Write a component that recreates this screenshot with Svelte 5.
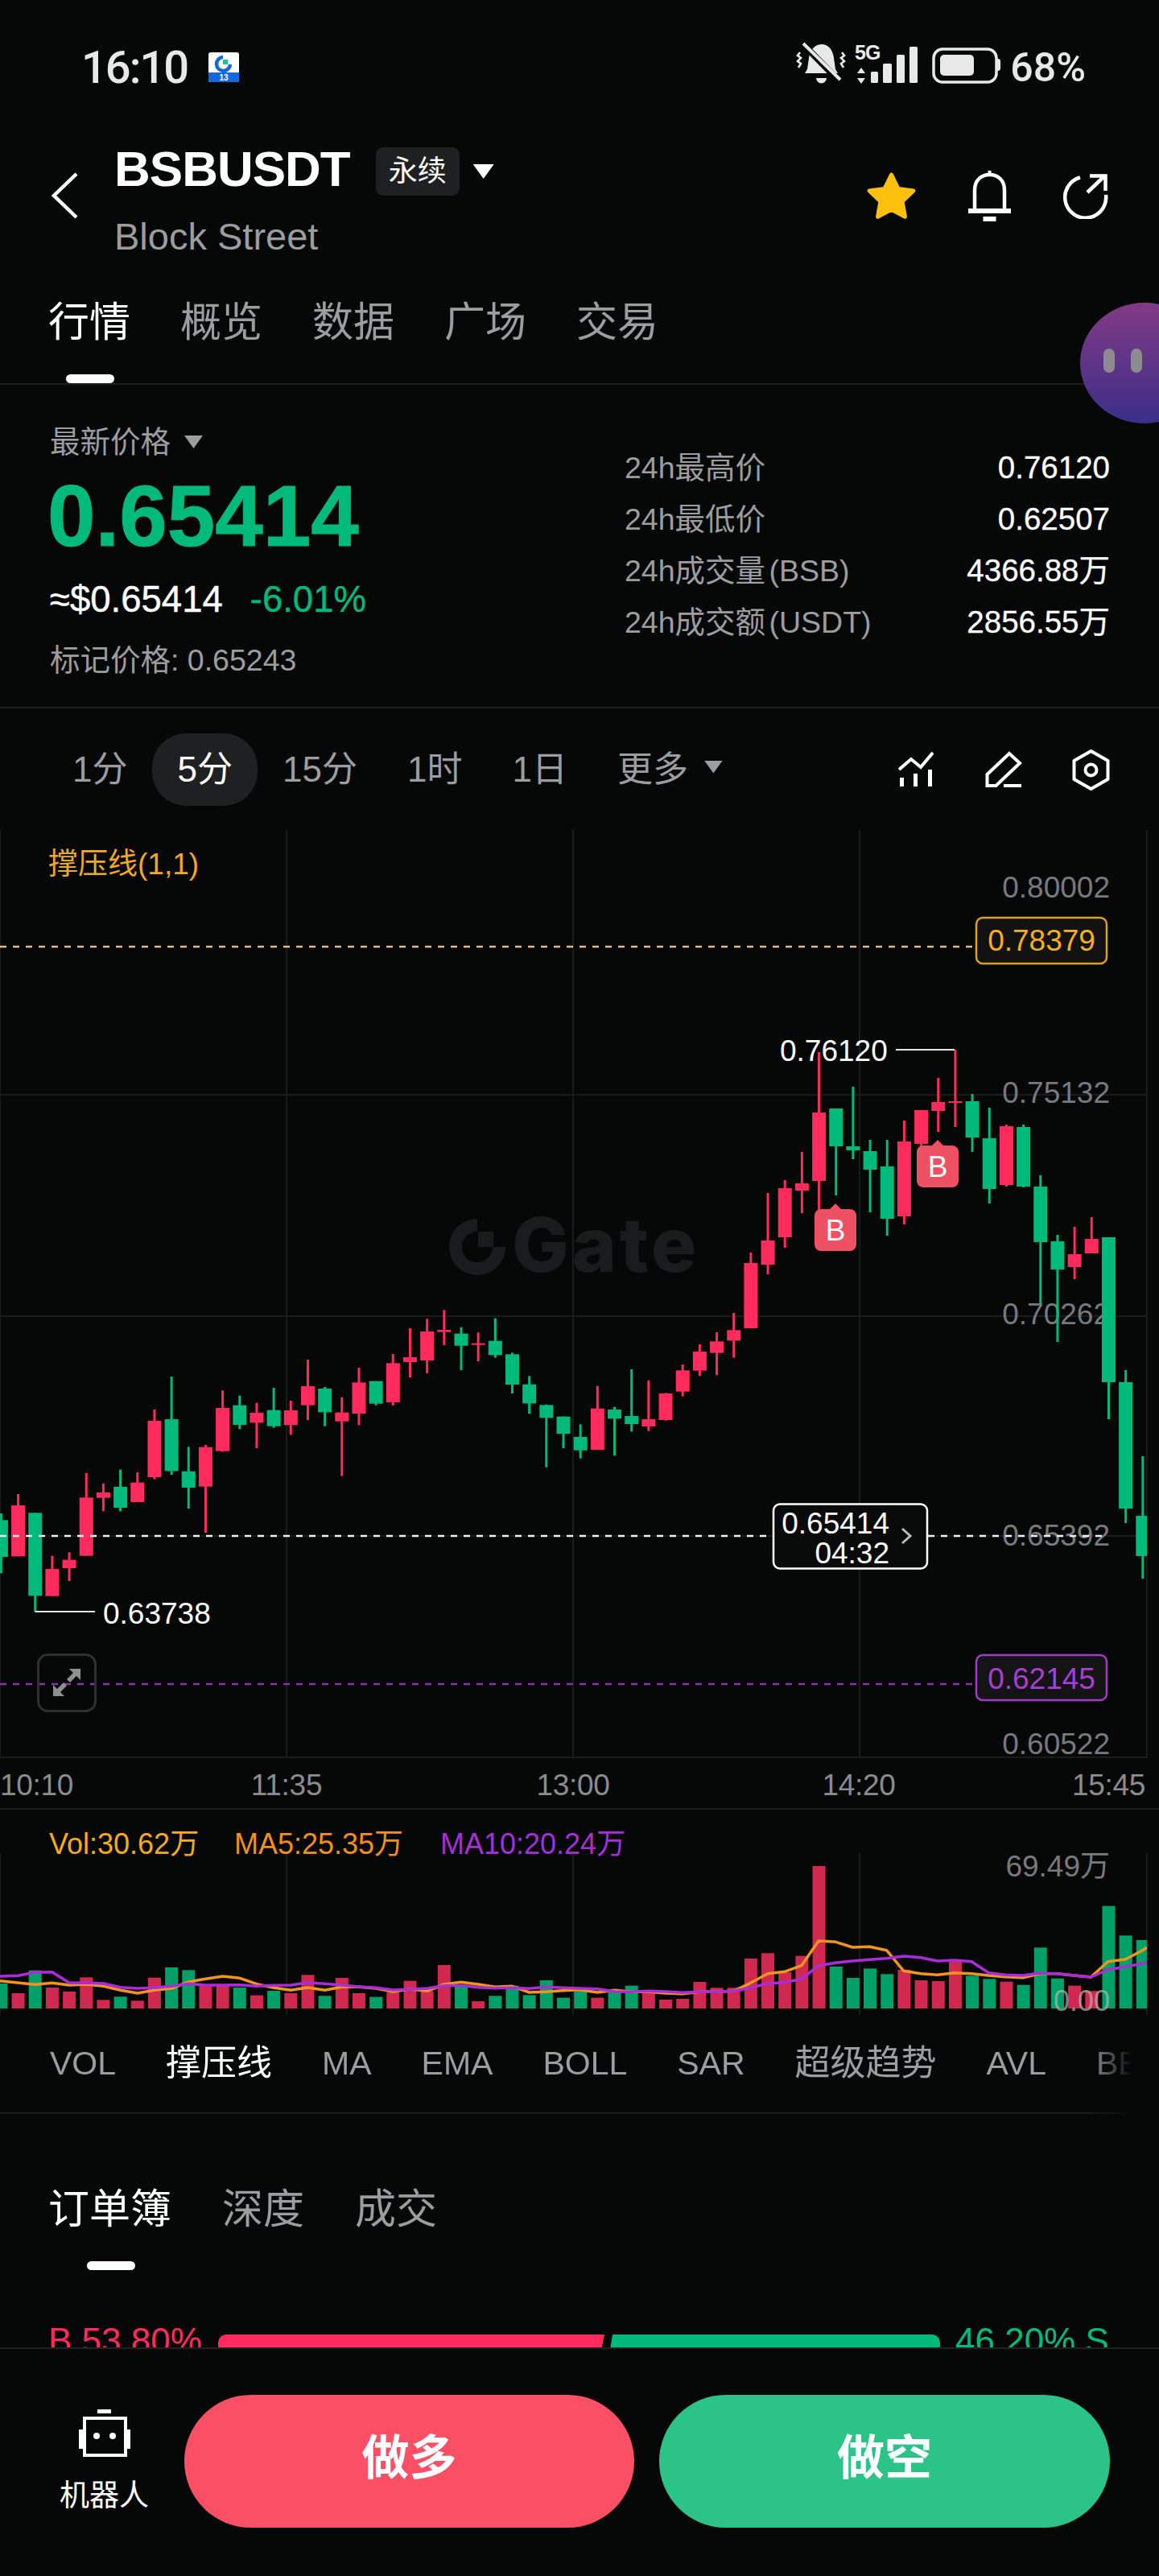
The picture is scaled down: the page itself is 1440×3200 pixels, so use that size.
<script>
  const Z = (v) => 1620 + v / 3;
  const early = [
    ['g',805,942,780,1003],['r',750,940,708,940],['g',778,1087,778,1148],['r',987,1088,938,1088],['r',953,984,925,1032],
    ['r',721,938,630,938],['r',702,722,668,772],['g',681,759,617,772],['r',665,738,627,738],['r',435,645,393,653],
    ['g',429,622,270,636],['g',623,684,532,762],['r',533,680,525,852],['r',387,548,322,550],['g',377,450,341,466],
    ['r',405,442,368,537],['g',395,455,312,461],['r',396,451,360,487],['r',306,377,207,432],['g',315,403,309,455],
    ['r',404,437,347,641],['r',292,408,237,451],['g',287,371,287,377],['r',220,366,186,378],['r',198,216,90,273],
    ['r',102,210,55,258],['r',96,104,22,153],['g',110,155,86,246],['r',146,150,106,213],['g',137,190,53,200],
    ['g',187,300,181,333],['g',299,370,268,409],['g',376,424,374,608],['g',419,483,419,537],['g',495,545,448,575],
    ['r',389,543,305,543],['g',393,427,383,565],['g',417,447,243,475],['r',429,456,284,473],['r',333,432,331,434],
    ['r',247,326,225,344],['r',177,248,150,268],['r',139,182,105,265],['r',97,136,33,200]
  ].map(([c, a, b, d, e]) => [c, Z(a), Z(b), Z(d), Z(e)]);
  const late = [
    ['r',1569,1650,1556,1650],['r',1541,1571,1482,1583],['r',1476,1537,1466,1550],['r',1470,1479,1431,1507],
    ['r',1382,1467,1307,1503],['g',1377,1424,1377,1485],['g',1424,1429,1350,1440],['g',1430,1453,1416,1506],
    ['g',1449,1514,1416,1535],['r',1418,1511,1392,1521],['r',1379,1421,1379,1424],['r',1369,1380,1339,1406],
    ['r',1368,1370,1304,1400],['g',1368,1413,1359,1431],['g',1414,1477,1376,1495],['r',1399,1472,1397,1474],
    ['g',1400,1474,1397,1475],['g',1474,1543,1460,1620],['g',1542,1577,1534,1667],['r',1558,1574,1524,1589],
    ['r',1539,1557,1512,1557],['g',1537,1717,1537,1763],['g',1717,1874,1702,1892],['g',1883,1933,1809,1961]
  ];
  const cx = (i) => 1.4 + 21.17 * i;
  const candles = [...early, ...late].map(([c, top, bottom, wt, wb], i) => ({
    c, x: cx(i), top, h: Math.max(2, bottom - top), wt, wb
  }));

  const volTops = [672,708,623,687,702,649,733,721,736,650,612,622,680,680,687,716,699,708,640,718,651,708,722,705,662,700,603,680,738,718,680,715,660,725,700,725,695,680,700,732,729,666,688,688,579,559,630,569,234,609,651,616,637,621,660,663,590,643,655,665,677,538,653,680,700,383,493,510];
  const VY = (v) => 2240 + v / 3;
  const bars = volTops.map((t, i) => ({ x: cx(i), top: VY(t), h: 2495 - VY(t), c: candles[i].c }));

  const lineOf = (left, right) => {
    const a = left.map(([x, y]) => `${(x / 2.178).toFixed(1)},${VY(y).toFixed(1)}`);
    const b = right.map(([x, y]) => `${(720 + x / 2.178).toFixed(1)},${VY(y).toFixed(1)}`);
    return [...a, ...b].join(' ');
  };
  const orange = lineOf(
    [[0,662],[95,676],[141,670],[188,678],[234,675],[280,682],[326,697],[372,708],[418,697],[464,690],[510,666],[556,655],[603,645],[649,652],[695,674],[741,688],[787,697],[833,687],[879,697],[925,685],[971,685],[1018,690],[1063,702],[1109,693],[1156,700],[1202,675],[1248,667],[1294,675],[1340,685],[1386,682],[1432,705],[1478,703],[1524,698]],
    [[0,695],[49,705],[95,697],[141,703],[187,703],[233,708],[279,710],[325,703],[371,703],[417,700],[463,670],[509,635],[555,628],[601,605],[647,513],[693,517],[739,537],[785,535],[831,548],[877,625],[923,635],[969,640],[1015,632],[1061,635],[1107,642],[1153,647],[1200,650],[1246,635],[1292,635],[1338,642],[1384,648],[1430,590],[1477,582],[1522,550],[1535,538]]
  );
  const purple = lineOf(
    [[0,645],[49,643],[95,630],[141,629],[188,670],[234,669],[280,672],[326,686],[372,690],[418,688],[464,682],[510,673],[556,678],[603,678],[649,677],[695,682],[741,679],[787,678],[833,668],[879,673],[925,678],[971,684],[1018,688],[1063,696],[1109,694],[1156,690],[1202,680],[1248,679],[1294,686],[1340,689],[1386,688],[1432,691],[1478,685],[1524,688]],
    [[0,690],[49,692],[95,702],[141,703],[187,700],[233,702],[279,706],[325,703],[371,703],[417,700],[463,688],[509,672],[555,668],[601,655],[647,605],[693,595],[739,588],[785,583],[831,578],[877,570],[923,575],[969,588],[1015,585],[1061,590],[1107,632],[1153,640],[1200,642],[1246,633],[1292,635],[1338,642],[1384,648],[1430,620],[1477,610],[1522,598],[1535,592]]
  );

  const grid = [0, 356, 712, 1068, 1425];
  const hgrid = [1360, 1635, 1908, 2183];
  const mainTabs = ['行情', '概览', '数据', '广场', '交易'];
  const frames = ['1分', '5分', '15分', '1时', '1日'];
  const stats = [
    ['24h最高价', '0.76120'],
    ['24h最低价', '0.62507'],
    ['24h成交量 (BSB)', '4366.88万'],
    ['24h成交额 (USDT)', '2856.55万']
  ];
  const indicators = ['VOL', '撑压线', 'MA', 'EMA', 'BOLL', 'SAR', '超级趋势', 'AVL', 'BBI'];
  const axisPrices = [['0.80002', 1115], ['0.75132', 1370], ['0.70262', 1645], ['0.65392', 1920], ['0.60522', 2179]];
  const markers = [{ x: 1038, y: 1502 }, { x: 1165, y: 1423 }];
</script>

<div class="app">
  <div class="status">
    <span class="time">16:10</span>
    <svg class="mini" width="38" height="37" viewBox="0 0 38 37">
      <rect width="38" height="37" rx="3" fill="#fff" />
      <path d="M0 25h38v9a3 3 0 0 1-3 3H3a3 3 0 0 1-3-3z" fill="#1467dc" />
      <path d="M18 6a8.5 8.5 0 1 0 9 9" fill="none" stroke="#1467dc" stroke-width="4.5" />
      <rect x="18" y="9" width="6" height="6" fill="#1fc48c" />
      <text x="19" y="35" text-anchor="middle" class="mini-t">13</text>
    </svg>
    <svg class="sysicons" width="254" height="53" viewBox="0 0 254 53">
      <path d="M32 3c8 0 14 7 15 17l2 14 3 5H11l3-5 2-14C17 10 24 3 32 3z" fill="#e8e8e8" />
      <path d="M25 45h13a6.5 6.5 0 0 1-13 0z" fill="#e8e8e8" />
      <path d="M6 0 53 48" stroke="#060808" stroke-width="8" />
      <path d="M9 2 55 47" stroke="#e8e8e8" stroke-width="4" />
      <path d="M5 13l-3 4 4 3-4 4 4 3-3 5M57 13l3 4-4 3 4 4-4 3 3 5" fill="none" stroke="#e8e8e8" stroke-width="2.6" />
      <text x="73" y="22" class="fiveg">5G</text>
      <path d="M81 32l5 7H76zM81 52l5-7H76z" fill="#e8e8e8" />
      <rect x="93" y="37" width="9" height="14" rx="1.5" fill="#e8e8e8" />
      <rect x="108" y="27" width="11" height="24" rx="1.5" fill="#e8e8e8" />
      <rect x="125" y="16" width="10" height="35" rx="1.5" fill="#e8e8e8" />
      <rect x="141" y="6" width="10" height="45" rx="1.5" fill="#e8e8e8" />
      <rect x="171" y="9" width="78" height="41" rx="11" fill="none" stroke="#e8e8e8" stroke-width="3.5" />
      <rect x="179" y="16" width="42" height="26" rx="5" fill="#e8e8e8" />
      <path d="M250 21h1a3 3 0 0 1 3 3v9a3 3 0 0 1-3 3h-1z" fill="#e8e8e8" />
    </svg>
    <span class="pct">68%</span>
  </div>

  <header class="header">
    <svg class="back" width="34" height="58" viewBox="0 0 34 58">
      <path d="M32 2 4 29l28 27" fill="none" stroke="#fff" stroke-width="4.5" />
    </svg>
    <div class="titles">
      <div class="title-row">
        <h1>BSBUSDT</h1>
        <span class="tag">永续</span>
        <span class="tri tri-white"></span>
      </div>
      <div class="sub">Block Street</div>
    </div>
    <div class="head-icons">
      <svg width="63" height="60" viewBox="0 0 63 60">
        <path d="M31.5 4l8.4 17.4 19 2.6-13.8 13.3 3.3 19-16.9-9.1-16.9 9.100 3.300-19L4.100 24l19-2.600z" fill="#fdc00d" stroke="#fdc00d" stroke-width="5" stroke-linejoin="round" />
      </svg>
      <svg width="53" height="63" viewBox="0 0 53 63">
        <path d="M8 49V24C8 12 16 5 26.500 5S45 12 45 24v25" fill="none" stroke="#fff" stroke-width="4.500" />
        <rect x="24.500" y="0" width="4" height="7" fill="#fff" />
        <rect x="0" y="47" width="53" height="6" fill="#fff" />
        <rect x="18.500" y="57" width="16" height="6" fill="#fff" />
      </svg>
      <svg width="57" height="57" viewBox="0 0 57 57">
        <path d="M22 5.500A25.500 25.500 0 1 0 54 27" fill="none" stroke="#fff" stroke-width="4.500" />
        <path d="M31 24 52 4M34 3.500h19.500V22" fill="none" stroke="#fff" stroke-width="4.500" />
      </svg>
    </div>
  </header>

  <nav class="tabs">
    {#each mainTabs as t, i}
      <span class="tab" class:on={i === 0}>{t}</span>
    {/each}
    <span class="tab-ink"></span>
  </nav>

  <section class="price">
    <div class="price-left">
      <div class="last-label">最新价格<span class="tri tri-gray"></span></div>
      <div class="big">0.65414</div>
      <div class="usd"><span>≈$0.65414</span><span class="chg">-6.01%</span></div>
      <div class="mark">标记价格: 0.65243</div>
    </div>
    <div class="price-right">
      {#each stats as [k, v]}
        <div class="stat"><span class="k">{k}</span><span class="v">{v}</span></div>
      {/each}
    </div>
  </section>

  <section class="frames">
    {#each frames as f, i}
      <span class="frame" class:on={i === 1}>{f}</span>
    {/each}
    <span class="more">更多<span class="tri tri-gray"></span></span>
    <div class="tools">
      <svg width="45" height="44" viewBox="1116 934 45 44">
        <path d="M1118 956l15-13 12 10 15-18" fill="none" stroke="#fff" stroke-width="4" />
        <rect x="1119" y="966" width="5" height="11" fill="#fff" />
        <rect x="1136" y="961" width="5" height="16" fill="#fff" />
        <rect x="1154" y="956" width="5" height="21" fill="#fff" />
      </svg>
      <svg class="pencil" width="44" height="46" viewBox="1225 932 44 46">
        <path d="M1227.500 961 1255 935l13 12-29.500 28h-11z" fill="none" stroke="#fff" stroke-width="4" />
        <rect x="1248" y="973" width="22" height="4" fill="#fff" />
      </svg>
      <svg width="47" height="52" viewBox="1333 930 47 52">
        <path d="M1356.500 933l21 12v23l-21 12-21-12v-23z" fill="none" stroke="#fff" stroke-width="4" stroke-linejoin="round" />
        <circle cx="1356.500" cy="956.500" r="7" fill="none" stroke="#fff" stroke-width="4" />
      </svg>
    </div>
  </section>

  <svg class="chart" width="1440" height="1490" viewBox="0 1031 1440 1490">
    <defs>
      <clipPath id="plot"><rect x="0" y="1031" width="1425" height="1490" /></clipPath>
    </defs>
    <!-- grid -->
    {#each grid as x}
      <line x1={x} x2={x} y1="1031" y2="2183" class="grid" />
      <line x1={x} x2={x} y1="2302" y2="2503" class="grid" />
    {/each}
    {#each hgrid as y}
      <line x1="0" x2="1425" y1={y} y2={y} class="grid" />
    {/each}
    <line x1="0" x2="1440" y1="2247" y2="2247" class="sep" />

    <!-- watermark -->
    <path d="M593 1522A27 27 0 1 0 620 1549" fill="none" stroke="#1a1b1c" stroke-width="16" />
    <rect x="594" y="1530" width="19" height="19" fill="#1a1b1c" />
    <text x="636" y="1580" class="wm">Gate</text>

    <!-- axis -->
    {#each axisPrices as [p, y]}
      <text x="1379" y={y} class="axis">{p}</text>
    {/each}
    <text x="60" y="1086" class="legend">撑压线(1,1)</text>

    <!-- candles -->
    <g clip-path="url(#plot)">
      {#each candles as k}
        <rect x={k.x - 1.500} y={k.wt} width="3" height={k.wb - k.wt} class={k.c} />
        <rect x={k.x - 8.500} y={k.top} width="17" height={k.h} class={k.c} />
      {/each}
    </g>

    <!-- high and low -->
    <text x="969" y="1318" class="hl">0.76120</text>
    <path d="M1113 1304H1186" class="hl-line" />
    <text x="128" y="2017" class="hl">0.63738</text>
    <path d="M44 2002H118" class="hl-line" />

    <!-- B markers -->
    {#each markers as m}
      <path d="M{m.x - 18} {m.y}h11l7-7 7 7h11a8 8 0 0 1 8 8v36a8 8 0 0 1-8 8h-36a8 8 0 0 1-8-8v-36a8 8 0 0 1 8-8z" fill="#ee5064" />
      <text x={m.x} y={m.y + 39} class="bmark">B</text>
    {/each}

    <!-- horizontal levels -->
    <line x1="0" x2="1212" y1="1176" y2="1176" class="dash-o" />
    <rect x="1213" y="1140" width="162" height="57" rx="8" class="box-o" />
    <text x="1294" y="1181" class="bt bt-o">0.78379</text>

    <line x1="0" x2="960" y1="1908" y2="1908" class="dash-w" />
    <line x1="1153" x2="1376" y1="1908" y2="1908" class="dash-w" />
    <rect x="961" y="1868.500" width="191" height="80" rx="8" class="box-w" />
    <text x="1105" y="1905" class="now">0.65414</text>
    <text x="1105" y="1942" class="now">04:32</text>
    <path d="M1121 1899l10 9-10 9" fill="none" stroke="#bdbdbd" stroke-width="3" />

    <line x1="0" x2="1209" y1="2092" y2="2092" class="dash-p" />
    <rect x="1213" y="2056" width="162" height="56" rx="8" class="box-p" />
    <text x="1294" y="2098" class="bt bt-p">0.62145</text>

    <!-- expand -->
    <rect x="47.500" y="2055.500" width="71" height="70" rx="12" class="exp" />
    <path d="M100 2073v14l-5-5-8 8-4-4 8-8-5-5zM66 2107v-14l5 5 8-8 4 4-8 8 5 5z" fill="#8f8f8f" />

    <!-- time axis -->
    <text x="0" y="2230" class="time-l">10:10</text>
    <text x="356" y="2230" class="time-l mid">11:35</text>
    <text x="712" y="2230" class="time-l mid">13:00</text>
    <text x="1067" y="2230" class="time-l mid">14:20</text>
    <text x="1423" y="2230" class="time-l end">15:45</text>

    <!-- volume -->
    <text x="61" y="2303" class="vl vl-y">Vol:30.62万</text>
    <text x="291" y="2303" class="vl vl-o">MA5:25.35万</text>
    <text x="547" y="2303" class="vl vl-p">MA10:20.24万</text>
    <g clip-path="url(#plot)">
      {#each bars as b}
        <rect x={b.x - 8} y={b.top} width="16" height={b.h} class="v{b.c}" />
      {/each}
    </g>
    <polyline points={orange} class="ma ma-o" />
    <polyline points={purple} class="ma ma-p" />
    <text x="1379" y="2331" class="axis">69.49万</text>
    <text x="1379" y="2498" class="axis zero">0.00</text>
  </svg>

  <div class="indicators">
    {#each indicators as t, i}
      <span class="ind" class:cjk={/[^\x00-\x7f]/.test(t)} class:on={i === 1}>{t}</span>
    {/each}
  </div>

  <section class="book">
    <div class="book-tabs">
      <span class="btab on">订单簿</span>
      <span class="btab">深度</span>
      <span class="btab">成交</span>
    </div>
    <span class="book-ink"></span>
    <div class="ratio">
      <span class="buy">B 53.80%</span>
      <span class="bar-r"></span>
      <span class="bar-g"></span>
      <span class="sell">46.20% S</span>
    </div>
  </section>

  <footer class="foot">
    <div class="robot">
      <svg width="64" height="60" viewBox="98 2993 64 60">
        <rect x="121" y="2993" width="17" height="5" fill="#fff" />
        <rect x="105" y="3004" width="51" height="46" fill="none" stroke="#fff" stroke-width="4" />
        <rect x="103" y="3048" width="55" height="4" fill="#fff" />
        <rect x="98" y="3018" width="5" height="24" fill="#fff" />
        <rect x="158" y="3018" width="4" height="24" fill="#fff" />
        <circle cx="120" cy="3026" r="4" fill="#fff" />
        <circle cx="140" cy="3026" r="4" fill="#fff" />
      </svg>
      <span>机器人</span>
    </div>
    <button class="btn long">做多</button>
    <button class="btn short">做空</button>
  </footer>

  <div class="bubble"><i></i><i></i></div>
</div>

<style>
  :global(body) { margin: 0; background: #060808; }
  .app {
    position: relative;
    width: 1440px;
    height: 3200px;
    overflow: hidden;
    background: #060808;
    color: #fff;
    font-family: "Liberation Sans", "Noto Sans CJK SC", sans-serif;
    display: flex;
    flex-direction: column;
  }
  .status {
    height: 130px;
    box-sizing: border-box;
    padding: 38px 91px 0 101px;
    display: flex;
    align-items: center;
    color: #e8e8e8;
  }
  .time { font: 500 56px/92px Roboto, sans-serif; letter-spacing: -2px; }
  .mini { margin-left: 26px; margin-top: -1px; }
  .mini-t { font: 700 10px "Liberation Sans", sans-serif; fill: #fff; }
  .sysicons { margin-left: auto; margin-top: -11px; }
  .fiveg { font: 700 25px "Liberation Sans", sans-serif; fill: #e8e8e8; letter-spacing: -1px; }
  .pct { font: 500 50px/92px Roboto, sans-serif; margin-left: 12px; }

  .header {
    height: 173px;
    box-sizing: border-box;
    padding: 53px 63px 0 63px;
    display: flex;
    align-items: center;
    flex: none;
  }
  .back { flex: none; }
  .titles { margin-left: 45px; height: 120px; display: flex; flex-direction: column; }
  .title-row { display: flex; align-items: center; height: 60px; }
  h1 { margin: 0 0 6px; font: 700 62px/60px "Liberation Sans", sans-serif; letter-spacing: -1px; }
  .tag {
    margin-left: 32px;
    width: 104px;
    height: 60px;
    border-radius: 9px;
    background: #1f2021;
    font-size: 36px;
    line-height: 60px;
    text-align: center;
  }
  .tri { display: inline-block; clip-path: polygon(0 0, 100% 0, 50% 100%); }
  .tri-white { width: 26px; height: 18px; margin-left: 17px; background: #fff; }
  .tri-gray { width: 23px; height: 16px; margin-left: 17px; background: #9b9d9f; }
  .sub { margin-top: 25px; font-size: 47px; line-height: 52px; color: #9b9d9f; }
  .head-icons { margin-left: auto; display: flex; align-items: center; gap: 64px; }

  .tabs {
    position: relative;
    flex: none;
    height: 175px;
    box-sizing: border-box;
    padding: 68px 0 0 60px;
    display: flex;
    gap: 62px;
    border-bottom: 2px solid #1b1d1f;
  }
  .tab { font-size: 51px; line-height: 60px; color: #9b9d9f; }
  .tab.on { color: #fff; }
  .tab-ink { position: absolute; left: 82px; bottom: 0; width: 60px; height: 11px; border-radius: 6px; background: #fff; }

  .price {
    flex: none;
    height: 402px;
    box-sizing: border-box;
    padding: 0 61px 0 62px;
    display: flex;
    justify-content: space-between;
    border-bottom: 2px solid #1b1d1f;
  }
  .last-label { margin-top: 49px; font-size: 37.500px; line-height: 44px; color: #9b9d9f; display: flex; align-items: center; }
  .big { margin-top: 15px; margin-left: -3px; font-size: 107px; font-weight: 700; line-height: 110px; color: #00ba7c; -webkit-text-stroke: 1px #00ba7c; }
  .usd { margin-top: 21px; font-size: 45.500px; line-height: 56px; display: flex; gap: 34px; -webkit-text-stroke: .4px; }
  .chg { color: #00b97a; }
  .mark { margin-top: 25px; font-size: 37.500px; line-height: 44px; color: #9b9d9f; }
  .price-right { width: 603px; padding-top: 71px; }
  .stat { height: 64px; line-height: 64px; display: flex; align-items: baseline; justify-content: space-between; }
  .k { font-size: 37.500px; color: #9b9d9f; word-spacing: -6px; }
  .v { font-size: 38.500px; color: #fff; -webkit-text-stroke: .3px; }

  .frames {
    flex: none;
    height: 151px;
    box-sizing: border-box;
    padding: 0 61px 0 59px;
    display: flex;
    align-items: center;
  }
  .frame { padding: 0 31px; height: 90px; line-height: 90px; border-radius: 42px; font-size: 44px; color: #9b9d9f; white-space: nowrap; }
  .frame.on { background: #1e2021; color: #fff; }
  .more { display: flex; align-items: center; padding-left: 31px; height: 90px; line-height: 90px; font-size: 44px; color: #9b9d9f; }
  .more .tri { margin-left: 20px; margin-top: -6px; }
  .tools { margin-left: auto; display: flex; align-items: center; gap: 64px; }
  .pencil { overflow: visible; }

  .chart { flex: none; display: block; }
  .grid { stroke: #191b1c; stroke-width: 2; }
  .sep { stroke: #1b1d1f; stroke-width: 2; }
  .wm { font: 800 94px Inter, sans-serif; fill: #1a1b1c; letter-spacing: 4px; }
  .axis { font-size: 37px; text-anchor: end; fill: #77797c; }
  .zero { font-size: 36px; fill: #b5b5b5; fill-opacity: .7; }
  .legend { font-size: 37px; fill: #f0a727; }
  .r { fill: #fe2b5c; }
  .g { fill: #00ba7c; }
  .vr { fill: #d0284f; }
  .vg { fill: #00a068; }
  .hl { font-size: 37px; fill: #fff; }
  .hl-line { stroke: #e6e6e6; stroke-width: 2; fill: none; }
  .bmark { font-size: 37px; fill: #fff; text-anchor: middle; }
  .dash-o { stroke: #e4bf7a; stroke-width: 2.500; stroke-dasharray: 8 8; }
  .dash-w { stroke: #f0f0f0; stroke-width: 2.500; stroke-dasharray: 8 8; }
  .dash-p { stroke: #8c2fb0; stroke-width: 2.500; stroke-dasharray: 8 8; }
  .box-o { fill: #121212; stroke: #dba21f; stroke-width: 2.500; }
  .box-p { fill: #141316; stroke: #a23cc6; stroke-width: 2.500; }
  .box-w { fill: #090a0a; stroke: #fff; stroke-width: 2.500; }
  .bt { font-size: 37px; text-anchor: middle; }
  .bt-o { fill: #f5ae1c; }
  .bt-p { fill: #a83fd0; }
  .now { font-size: 37px; fill: #fff; text-anchor: end; }
  .exp { fill: none; stroke: #2e2f30; stroke-width: 3; }
  .time-l { font-size: 37px; letter-spacing: -.3px; fill: #8a8c8e; }
  .mid { text-anchor: middle; }
  .end { text-anchor: end; }
  .vl { font-size: 36px; }
  .vl-y { fill: #f5ab1d; }
  .vl-o { fill: #f08f1e; }
  .vl-p { fill: #a42fd6; }
  .ma { fill: none; stroke-width: 3.500; stroke-linejoin: round; }
  .ma-o { stroke: #f0951e; }
  .ma-p { stroke: #a92cd6; }

  .indicators {
    flex: none;
    height: 105px;
    box-sizing: border-box;
    width: 1440px;
    padding: 16px 0 0 62px;
    display: flex;
    gap: 62px;
    align-items: flex-start;
    overflow: hidden;
    border-bottom: 2px solid #1b1d1f;
    mask-image: linear-gradient(to right, #000 1350px, transparent 1407px);
    -webkit-mask-image: linear-gradient(to right, #000 1350px, transparent 1407px);
  }
  .ind { font-size: 41px; line-height: 52px; color: #9b9d9f; white-space: nowrap; }
  .ind.cjk { font-size: 44px; }
  .ind.on { color: #fff; }

  .book { flex: 1; min-height: 0; overflow: hidden; padding: 89px 61px 0 60px; }
  .book-tabs { display: flex; gap: 63px; }
  .btab { font-size: 51px; line-height: 60px; color: #9b9d9f; }
  .btab.on { color: #fff; }
  .book-ink { display: block; margin: 34px 0 0 48px; width: 60px; height: 11px; border-radius: 6px; background: #fff; }
  .ratio { margin-top: 66px; display: flex; align-items: flex-start; font-size: 44px; line-height: 44px; }
  .buy { color: #fe2b5c; width: 211px; white-space: nowrap; }
  .sell { color: #00ba7c; margin-left: 19px; white-space: nowrap; }
  .bar-r, .bar-g { height: 24px; margin-top: 14px; }
  .bar-r { width: 480px; background: #fe2b5c; border-radius: 10px 0 0 10px; clip-path: polygon(0 0, 100% 0, 99% 100%, 0 100%); }
  .bar-g { width: 411px; margin-left: 6px; background: #00ba7c; border-radius: 0 10px 10px 0; clip-path: polygon(1% 0, 100% 0, 100% 100%, 0 100%); }

  .foot {
    flex: none;
    height: 284px;
    box-sizing: border-box;
    padding: 57px 61px 0 61px;
    display: flex;
    align-items: flex-start;
    gap: 31px;
    border-top: 2px solid #1f2122;
  }
  .robot { width: 137px; margin-top: 18px; display: flex; flex-direction: column; align-items: center; font-size: 37px; line-height: 44px; }
  .robot span { margin-top: 26px; }
  .robot svg { display: block; }
  .btn {
    height: 165px;
    border: 0;
    border-radius: 83px;
    padding: 0 0 18px;
    color: #fff;
    font: 700 59px "Liberation Sans", "Noto Sans CJK SC", sans-serif;
  }
  .long { width: 559px; background: #fb4f66; }
  .short { width: 560px; background: #2cc388; }

  .bubble {
    position: absolute;
    left: 1342px;
    top: 376px;
    width: 160px;
    height: 150px;
    border-radius: 50%;
    background: linear-gradient(#823a84, #3a2f88);
    display: flex;
    gap: 20px;
    padding: 57px 0 0 29px;
    box-sizing: border-box;
  }
  .bubble i { width: 14px; height: 30px; border-radius: 7px; background: #8c8b90; }
</style>
